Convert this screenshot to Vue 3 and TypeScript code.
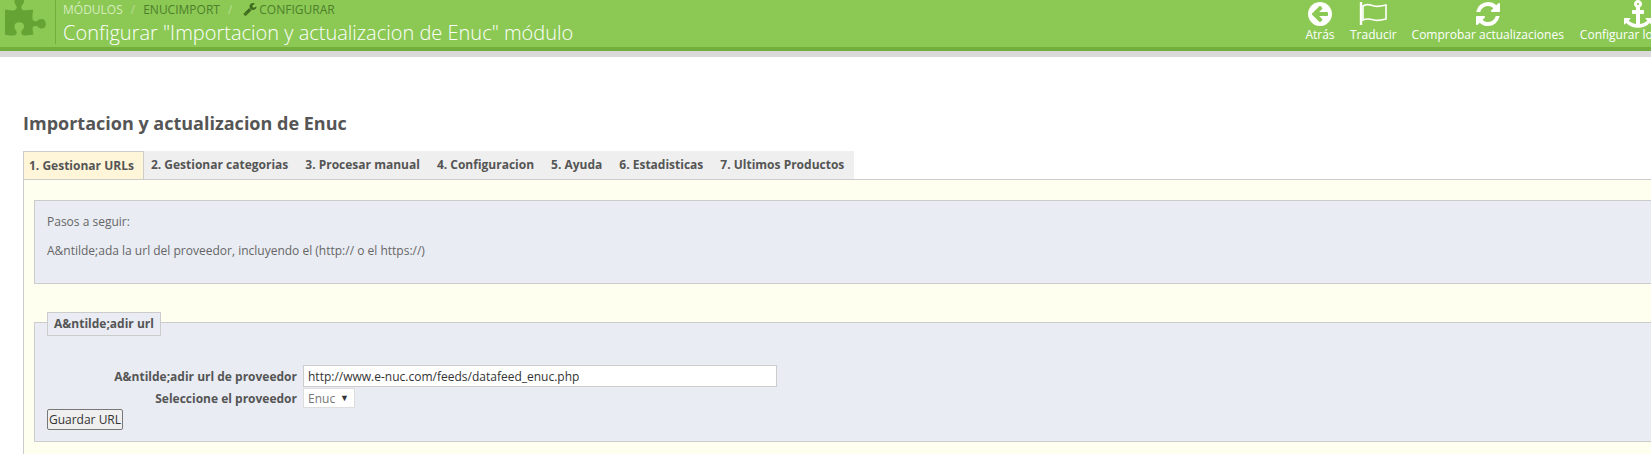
<script setup lang="ts">
const tabs = ['1. Gestionar URLs', '2. Gestionar categorias', '3. Procesar manual', '4. Configuracion', '5. Ayuda', '6. Estadisticas', '7. Ultimos Productos']
const icons: Record<string, string> = {
  back: 'M1408 960v-128q0-26-19-45t-45-19h-502l189-189q19-19 19-45t-19-45l-91-91q-18-18-45-18t-45 18l-362 362-91 91q-18 18-18 45t18 45l91 91 362 362q18 18 45 18t45-18l91-91q18-18 18-45t-18-45l-189-189h502q26 0 45-19t19-45zm256-64q0 209-103 385.5t-279.5 279.5-385.5 103-385.5-103-279.5-279.5-103-385.5 103-385.5 279.5-279.5 385.5-103 385.5 103 279.5 279.5 103 385.5z',
  refresh: 'M1639 1056q0 5-1 7-64 268-268 434.5t-478 166.5q-146 0-282.5-55t-243.5-157l-129 129q-19 19-45 19t-45-19-19-45v-448q0-26 19-45t45-19h448q26 0 45 19t19 45-19 45l-137 137q71 66 161 102t187 36q134 0 250-65t186-179q11-17 53-117 8-23 30-23h192q13 0 22.5 9.5t9.5 22.5zm25-800v448q0 26-19 45t-45 19h-448q-26 0-45-19t-19-45 19-45l138-138q-148-137-349-137-134 0-250 65t-186 179q-11 17-53 117-8 23-30 23h-199q-13 0-22.5-9.5t-9.5-22.5v-7q65-268 270-434.5t480-166.5q146 0 284 55.5t245 156.5l130-129q19-19 45-19t45 19 19 45z',
  anchor: 'M960 256q0-26-19-45t-45-19-45 19-19 45 19 45 45 19 45-19 19-45zm832 928v352q0 22-20 30-8 2-12 2-12 0-23-9l-93-93q-119 143-318.5 226.5t-429.5 83.5-429.5-83.5-318.5-226.5l-93 93q-9 9-23 9-4 0-12-2-20-8-20-30v-352q0-14 9-23t23-9h352q22 0 30 20 8 19-7 35l-100 100q67 91 189.5 153.5t271.5 82.5v-647h-192q-26 0-45-19t-19-45v-128q0-26 19-45t45-19h192v-163q-58-34-93-92.5t-35-128.5q0-106 75-181t181-75 181 75 75 181q0 70-35 128.5t-93 92.5v163h192q26 0 45 19t19 45v128q0 26-19 45t-45 19h-192v647q149-20 271.5-82.5t189.5-153.5l-100-100q-15-16-7-35 8-20 30-20h352q14 0 23 9t9 23z',
}
</script>

<template>
  <div class="page">
    <header class="head">
      <svg class="puzzle" viewBox="0 0 1792 1792"><path fill="currentColor" d="M1664 1098q0 81-44.5 135t-123.5 54q-41 0-77.5-17.5t-59-38-56.5-38-71-17.5q-110 0-110 124 0 39 16 115t15 115v5q-22 0-33 1-34 3-97.5 11.5t-115.5 13.5-98 5q-61 0-103-26.5t-42-83.5q0-37 17.5-71t38-56.5 38-59 17.5-77.5q0-79-54-123.5t-135-44.5q-84 0-143 45.5t-59 127.5q0 43 15 83t33.5 64.5 33.5 53 15 50.5q0 45-46 89-37 35-117 35-95 0-245-24-9-2-27.5-4t-27.5-4l-13-2q-1 0-3-1-2 0-2-1v-1024q2 1 17.5 3.5t34 5 21.5 3.5q150 24 245 24 80 0 117-35 46-44 46-89 0-22-15-50.5t-33.5-53-33.5-64.5-15-83q0-82 59-127.5t144-45.5q80 0 134 44.5t54 123.5q0 41-17.5 77.5t-38 59-38 56.5-17.5 71q0 57 42 83.5t103 26.5q64 0 180-15t163-17v2q-1 2-3.5 17.5t-5 34-3.5 21.5q-24 150-24 245 0 80 35 117 44 46 89 46 22 0 50.5-15t53-33.5 64.5-33.5 83-15q82 0 127.5 59t45.5 143z"/></svg>
      <div class="titles">
        <nav class="crumbs">
          <span class="first">MÓDULOS</span><span class="sep">/</span><span>ENUCIMPORT</span><span class="sep">/</span>
          <svg class="wrench" viewBox="0 0 1792 1792"><path fill="currentColor" d="M448 1472q0-26-19-45t-45-19-45 19-19 45 19 45 45 19 45-19 19-45zm644-420l-682 682q-37 37-90 37-52 0-91-37l-106-108q-38-36-38-90 0-53 38-91l681-681q39 98 114.5 173.5t173.5 114.5zm634-435q0 39-23 106-47 134-164.5 217.5t-258.5 83.5q-185 0-316.5-131.5t-131.5-316.5 131.5-316.5 316.5-131.5q58 0 121.5 16.5t107.5 46.5q16 11 16 28t-16 28l-293 169v224l193 107q5-3 79-48.5t135.5-81 70.5-35.5q15 0 23.5 10t8.5 25z"/></svg>
          <span>CONFIGURAR</span>
        </nav>
        <h1 class="title">Configurar "Importacion y actualizacion de Enuc" módulo</h1>
      </div>
      <div class="tools">
        <a class="tool back"><svg viewBox="0 0 1792 1792"><path fill="currentColor" :d="icons.back"/></svg><span>Atrás</span></a>
        <a class="tool flag">
          <svg viewBox="0 0 38 28"><path fill="none" stroke="currentColor" stroke-width="1.6" d="M9 6c4-3 7-1 11 0s8 0 12-1v14c-4 1-8 2-12 1s-7-2-11 0z"/><path fill="none" stroke="currentColor" stroke-width="2.4" d="M7 2v23"/></svg>
          <span>Traducir</span>
        </a>
        <a class="tool"><svg viewBox="0 0 1792 1792"><path fill="currentColor" :d="icons.refresh"/></svg><span>Comprobar actualizaciones</span></a>
        <a class="tool last"><svg viewBox="0 0 1792 1792"><path fill="currentColor" :d="icons.anchor"/></svg><span>Configurar los hooks</span></a>
      </div>
    </header>

    <main class="main">
      <h2 class="heading">Importacion y actualizacion de Enuc</h2>
      <ul class="tabs">
        <li v-for="(t, i) in tabs" :key="t" class="tab" :class="{ active: i === 0 }">{{ t }}</li>
      </ul>
      <section class="content">
        <div class="info">
          <p>Pasos a seguir:</p>
          <p>A&amp;ntilde;ada la url del proveedor, incluyendo el (http:// o el https://)</p>
        </div>
        <fieldset class="field">
          <legend>A&amp;ntilde;adir url</legend>
          <div class="row">
            <label>A&amp;ntilde;adir url de proveedor</label>
            <input class="url" type="text" value="http://www.e-nuc.com/feeds/datafeed_enuc.php" />
          </div>
          <div class="row">
            <label>Seleccione el proveedor</label>
            <div class="select">Enuc<span class="caret">▼</span></div>
          </div>
          <button class="save" type="button">Guardar URL</button>
        </fieldset>
      </section>
    </main>
  </div>
</template>

<style>
html, body { overflow: hidden; margin: 0; background: #fff; }
</style>

<style scoped>
.page { width: 1900px; height: 454px; overflow: hidden; font-family: "Open Sans", sans-serif; color: #555; font-size: 12px; }
.head { height: 47px; background: #8bc954; border-bottom: 4px solid #72ad3e; box-shadow: 0 6px 0 #d9d9d9; display: flex; position: relative; color: #fff; width: 1651px; overflow: hidden; box-sizing: content-box; }
.puzzle { width: 44px; height: 44px; margin: -3px 6px 0 5px; color: #66a335; flex: none; }
.titles { border-left: 1px solid #6fae3c; height: 44px; padding-left: 7px; flex: none; }
.crumbs { display: flex; align-items: center; height: 18px; font-size: 12px; color: #4e7f2b; }
.first { color: #d6ecbd; }
.sep { margin: 0 8px; color: #b9dd95; }
.wrench { width: 14px; height: 14px; margin: 0 2px 0 3px; color: #3e6a1e; }
.title { margin: 2px 0 0; font-size: 20px; font-weight: 300; line-height: 26px; color: #fff; white-space: nowrap; }
.tools { display: flex; gap: 15px; position: absolute; left: 1305px; top: 0; white-space: nowrap; }
.tool { display: flex; flex-direction: column; align-items: center; font-size: 12px; color: #fff; }
.tool svg { width: 30px; height: 28px; display: block; }
.tool.flag svg { width: 38px; }
.tool.last { margin-left: 1px; }
.tool span { line-height: 14px; }
.main { padding: 0 0 0 23px; }
.heading { margin: 0; padding-top: 60px; font-size: 18px; font-weight: 700; line-height: 24px; color: #555; }
.tabs { list-style: none; margin: 16px 0 0; padding: 0; display: flex; height: 28px; }
.tab { background: #efefef; font-weight: 700; font-size: 12px; line-height: 28px; padding: 0 10px 0 7px; color: #555; white-space: nowrap; }
.tab.active { background: #fff5d9; border: 1px solid #ccc; border-bottom: 0; line-height: 27px; padding: 0 9px 0 5px; }
.content { background: #ffffef; border: 1px solid #ccc; border-right: 0; border-bottom: 0; padding: 20px 0 0 10px; height: 400px; box-sizing: border-box; }
.info { background: #e9ecf3; border: 1px solid #ccc; height: 84px; box-sizing: border-box; padding: 12px 12px; font-size: 12px; color: #666; }
.info p { margin: 0 0 12px; line-height: 17px; }
.field { margin: 38px 0 0; padding: 42px 12px 0; background: #e9ecf3; border: 1px solid #ccc; height: 120px; box-sizing: border-box; min-width: 0; position: relative; }
.field legend { background: #e9ecf3; border: 1px solid #ccc; padding: 0 6px; line-height: 22px; font-weight: 700; font-size: 12px; color: #555; position: absolute; top: -11px; left: 12px; }
.row { display: flex; align-items: center; margin-bottom: 1px; }
.row label { width: 250px; text-align: right; font-weight: 700; font-size: 12px; color: #555; padding-right: 6px; }
.url { width: 474px; height: 22px; box-sizing: border-box; border: 1px solid #ccc; background: #fff; padding: 0 4px; font: 12px "Open Sans", sans-serif; color: #333; }
.select { width: 52px; height: 20px; box-sizing: border-box; border: 1px solid #ddd; background: #fff; padding-left: 4px; line-height: 19px; color: #777; font-size: 12px; position: relative; }
.caret { position: absolute; right: 5px; top: -1px; font-size: 9px; color: #333; }
.save { display: block; width: 76px; height: 21px; padding: 0; font: 12px "Open Sans", sans-serif; color: #333; background: #efefef; border: 1px solid #777; border-radius: 2px; margin-top: 0; }
</style>
